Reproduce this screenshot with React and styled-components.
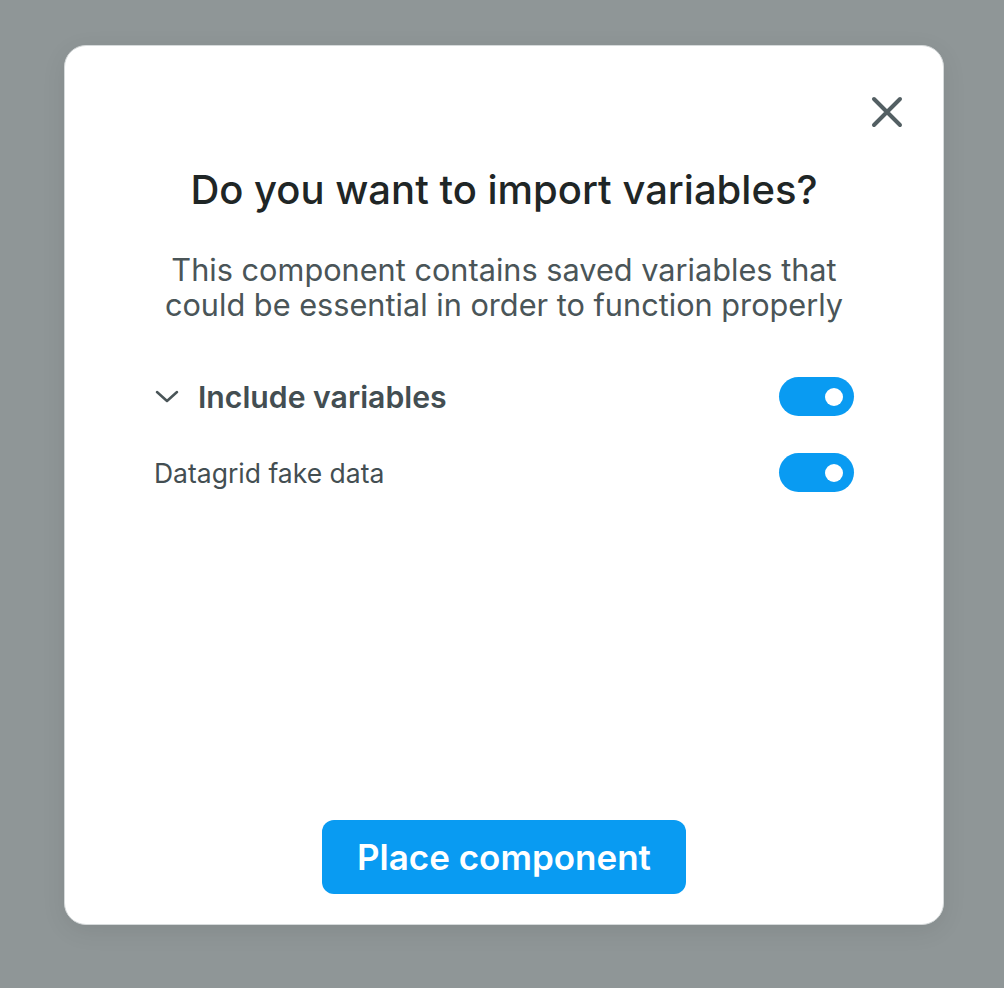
import React, { useState } from "react";
import styled, { createGlobalStyle } from "styled-components";

const GlobalStyle = createGlobalStyle`
  * { box-sizing: border-box; }
  body {
    margin: 0;
    background: #8f9697;
    font-family: Inter, "Noto Sans", sans-serif;
  }
`;

const Page = styled.div`
  min-height: 988px;
  padding: 45px 0 0 64px;
`;

const Modal = styled.div`
  position: relative;
  width: 880px;
  height: 880px;
  background: #ffffff;
  border: 1.5px solid #d6dadb;
  border-radius: 22px;
  box-shadow: 0 6px 24px rgba(0, 0, 0, 0.08);
  display: flex;
  flex-direction: column;
  padding: 120px 89px 30px;
`;

const CloseButton = styled.button`
  position: absolute;
  top: 48px;
  right: 38px;
  width: 36px;
  height: 36px;
  padding: 0;
  border: none;
  background: none;
  display: flex;
  align-items: center;
  justify-content: center;
  cursor: pointer;
`;

const Title = styled.h2`
  margin: 0;
  text-align: center;
  font-size: 40px;
  line-height: 48px;
  font-weight: 500;
  color: #1f2626;
  white-space: nowrap;
`;

const Subtitle = styled.p`
  margin: 38px 0 0;
  text-align: center;
  font-size: 30.7px;
  line-height: 35px;
  font-weight: 400;
  color: #4a5558;
  white-space: nowrap;
`;

const Row = styled.div`
  display: flex;
  align-items: center;
  justify-content: space-between;
  margin-top: ${(p) => p.$gap}px;
`;

const Label = styled.div`
  display: flex;
  align-items: center;
  gap: 18px;
  font-size: ${(p) => (p.$main ? 30.2 : 26.5)}px;
  font-weight: ${(p) => (p.$main ? 600 : 400)};
  color: #434e52;
`;

const Toggle = styled.button`
  width: 75px;
  height: 39px;
  border-radius: 20px;
  border: none;
  padding: 0 11px;
  background: ${(p) => (p.$on ? "#099bf2" : "#c9cfd1")};
  display: flex;
  align-items: center;
  justify-content: ${(p) => (p.$on ? "flex-end" : "flex-start")};
  cursor: pointer;

  &::after {
    content: "";
    width: 18px;
    height: 18px;
    border-radius: 50%;
    background: #ffffff;
  }
`;

const Footer = styled.div`
  margin-top: auto;
  display: flex;
  justify-content: center;
`;

const PrimaryButton = styled.button`
  width: 364px;
  height: 74px;
  border: none;
  border-radius: 12px;
  background: #099bf2;
  color: #ffffff;
  font-family: Inter, "Noto Sans", sans-serif;
  font-size: 35px;
  font-weight: 600;
  cursor: pointer;
`;

const App = () => {
  const [includeVars, setIncludeVars] = useState(true);
  const [fakeData, setFakeData] = useState(true);

  return (
    <Page>
      <GlobalStyle />
      <Modal>
        <CloseButton aria-label="Close">
          <svg width="32" height="32" viewBox="0 0 32 32">
            <path
              d="M3 3L29 29M29 3L3 29"
              stroke="#535f63"
              strokeWidth="4"
              strokeLinecap="round"
            />
          </svg>
        </CloseButton>

        <Title>Do you want to import variables?</Title>
        <Subtitle>
          This component contains saved variables that
          <br />
          could be essential in order to function properly
        </Subtitle>

        <Row $gap={55}>
          <Label $main>
            <svg width="26" height="16" viewBox="0 0 26 16">
              <path
                d="M3 3L13 12L23 3"
                fill="none"
                stroke="#4a5558"
                strokeWidth="2.5"
                strokeLinecap="round"
                strokeLinejoin="round"
              />
            </svg>
            Include variables
          </Label>
          <Toggle $on={includeVars} onClick={() => setIncludeVars(!includeVars)} />
        </Row>

        <Row $gap={37}>
          <Label>Datagrid fake data</Label>
          <Toggle $on={fakeData} onClick={() => setFakeData(!fakeData)} />
        </Row>

        <Footer>
          <PrimaryButton>Place component</PrimaryButton>
        </Footer>
      </Modal>
    </Page>
  );
};

export default App;
